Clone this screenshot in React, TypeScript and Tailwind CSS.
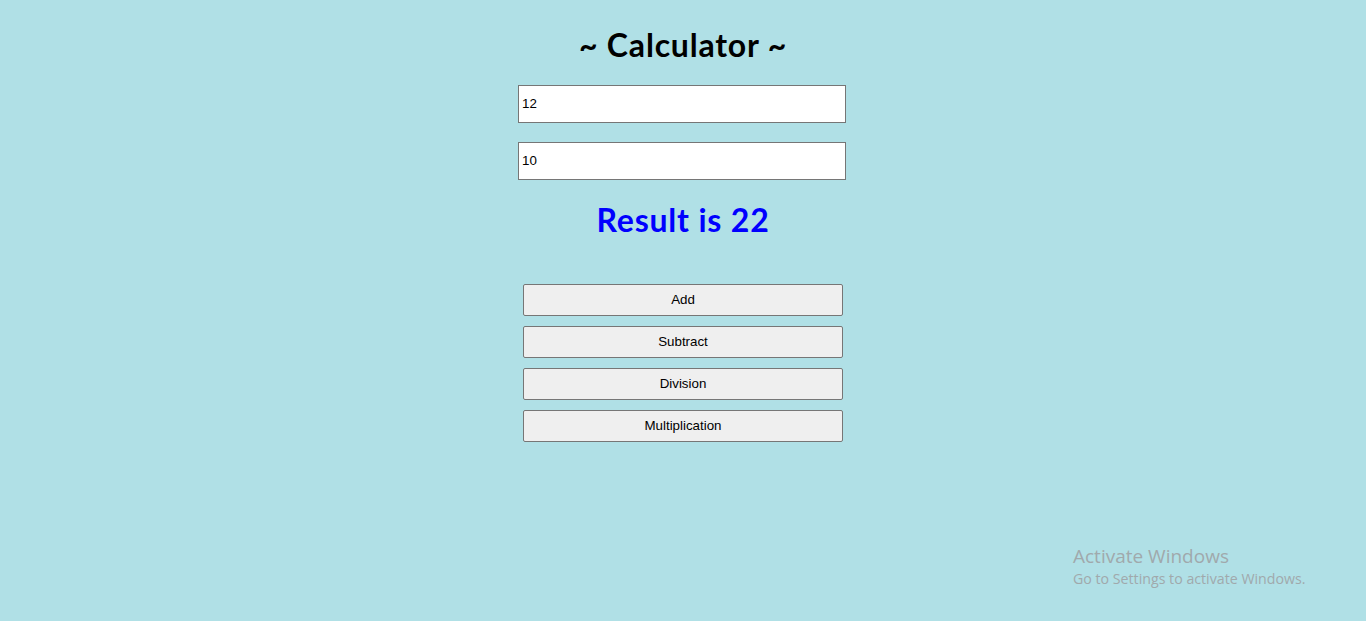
import React, { useState } from 'react'

const ops = ['Add', 'Subtract', 'Division', 'Multiplication']

export default function App() {
  const [a, setA] = useState('12')
  const [b, setB] = useState('10')
  const [result, setResult] = useState(22)

  const run = (op: string) => {
    const x = Number(a)
    const y = Number(b)
    if (op === 'Add') setResult(x + y)
    if (op === 'Subtract') setResult(x - y)
    if (op === 'Division') setResult(x / y)
    if (op === 'Multiplication') setResult(x * y)
  }

  return (
    <div className="relative min-h-[621px] w-full bg-[#b0e0e6] font-['Liberation_Sans',Arial,sans-serif]">
      <div className="flex flex-col items-center pt-[26px]">
        {/* Title */}
        <h1 className="font-['Lato','DejaVu_Sans',sans-serif] text-[32px] font-bold leading-[37px] tracking-[0.8px] text-black">
          ~ Calculator ~
        </h1>

        {/* Inputs */}
        <div className="mt-[22px] flex flex-col gap-[19px] pr-[2px]">
          <input
            value={a}
            onChange={(e) => setA(e.target.value)}
            className="h-[38px] w-[328px] border border-[#767676] bg-white px-[3px] pb-[1px] text-[13.33px] text-black outline-none"
          />
          <input
            value={b}
            onChange={(e) => setB(e.target.value)}
            className="h-[38px] w-[328px] border border-[#767676] bg-white px-[3px] pb-[1px] text-[13.33px] text-black outline-none"
          />
        </div>

        {/* Result */}
        <h2 className="mt-[21px] font-['Lato','DejaVu_Sans',sans-serif] text-[32px] font-bold leading-[37px] tracking-[0.8px] text-[#0000ff]">
          Result is {result}
        </h2>

        {/* Buttons */}
        <div className="mt-[46px] flex flex-col gap-[10px]">
          {ops.map((op) => (
            <button
              key={op}
              onClick={() => run(op)}
              className="h-[32px] w-[320px] rounded-[2px] border border-[#767676] bg-[#efefef] text-[13.33px] text-black"
            >
              {op}
            </button>
          ))}
        </div>
      </div>

      {/* Windows activation watermark */}
      <div className="pointer-events-none absolute left-[1073px] top-[543px] font-['Open_Sans',sans-serif] text-[#a0a9ac]">
        <div className="text-[19px] leading-[26px]">Activate Windows</div>
        <div className="text-[14.2px] leading-[20px]">Go to Settings to activate Windows.</div>
      </div>
    </div>
  )
}
